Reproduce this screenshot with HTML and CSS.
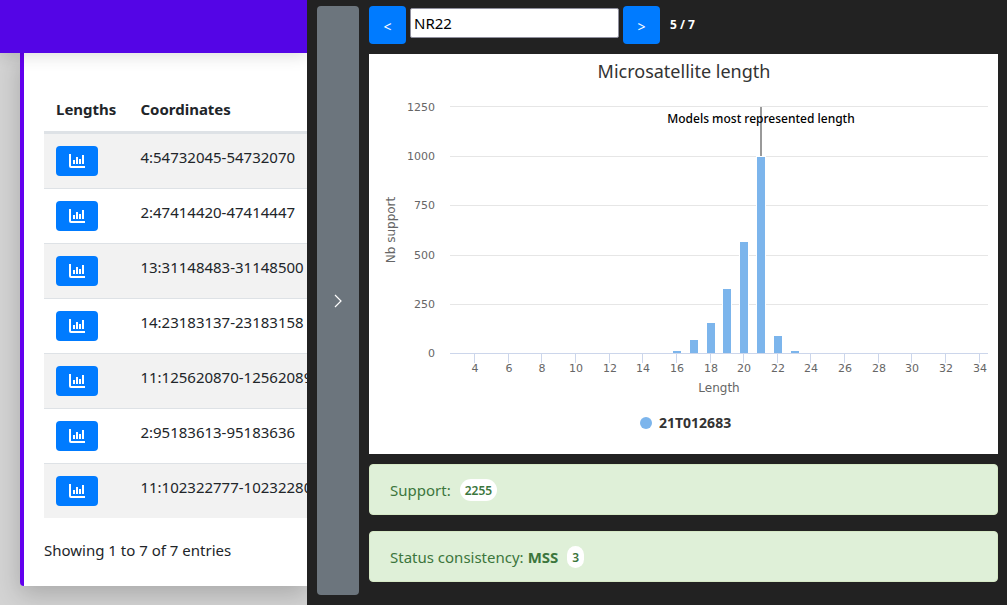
FILE: index.html
```html
<!DOCTYPE html>
<html lang="en">
<head>
<meta charset="utf-8">
<meta name="viewport" content="width=device-width, initial-scale=1">
<title>Microsatellite length</title>
<link rel="stylesheet" href="styles.css">
</head>
<body>
<svg class="defs" aria-hidden="true">
  <symbol id="chart-icon" viewBox="0 0 16 14">
    <path d="M0 0h2v12h14v2H2Q0 14 0 12zM4 6h2v4H4zM7 3h2v7H7zM10 5h2v5h-2zM13 1h2v9h-2z" fill="currentColor"/>
  </symbol>
</svg>
<div class="page">
  <div class="main">
    <header class="topbar"></header>
    <main class="content">
      <section class="card">
        <table class="loci">
          <thead>
            <tr><th class="col-lengths" scope="col">Lengths</th><th scope="col">Coordinates</th></tr>
          </thead>
          <tbody>
            <tr><td><button class="btn btn-chart" type="button" aria-label="Show lengths"><svg><use href="#chart-icon"/></svg></button></td><td>4:54732045-54732070</td></tr>
            <tr><td><button class="btn btn-chart" type="button" aria-label="Show lengths"><svg><use href="#chart-icon"/></svg></button></td><td>2:47414420-47414447</td></tr>
            <tr><td><button class="btn btn-chart" type="button" aria-label="Show lengths"><svg><use href="#chart-icon"/></svg></button></td><td>13:31148483-31148500</td></tr>
            <tr><td><button class="btn btn-chart" type="button" aria-label="Show lengths"><svg><use href="#chart-icon"/></svg></button></td><td>14:23183137-23183158</td></tr>
            <tr><td><button class="btn btn-chart" type="button" aria-label="Show lengths"><svg><use href="#chart-icon"/></svg></button></td><td>11:125620870-125620895</td></tr>
            <tr><td><button class="btn btn-chart" type="button" aria-label="Show lengths"><svg><use href="#chart-icon"/></svg></button></td><td>2:95183613-95183636</td></tr>
            <tr><td><button class="btn btn-chart" type="button" aria-label="Show lengths"><svg><use href="#chart-icon"/></svg></button></td><td>11:102322777-102322803</td></tr>
          </tbody>
        </table>
        <p class="info">Showing 1 to 7 of 7 entries</p>
      </section>
    </main>
  </div>
  <aside class="drawer">
    <button class="handle" type="button" aria-label="Close panel">
      <svg width="8" height="14" viewBox="0 0 8 14"><path d="M1 1l6 6-6 6" fill="none" stroke="#fff" stroke-width="1.2"/></svg>
    </button>
    <div class="details">
      <form class="nav">
        <button class="btn btn-nav" type="button" aria-label="Previous locus">&lt;</button>
        <input class="locus" type="text" value="NR22" aria-label="Locus">
        <button class="btn btn-nav" type="button" aria-label="Next locus">&gt;</button>
        <span class="count">5 / 7</span>
      </form>
      <svg class="chart" viewBox="0 0 629 400" role="img" aria-label="Microsatellite length">
        <rect width="629" height="400" fill="#fff"/>
        <text class="chart-title" x="315" y="24">Microsatellite length</text>
        <path class="grid" d="M81 52.5H619M81 102.5H619M81 151.5H619M81 201.5H619M81 250.5H619"/>
        <path class="plot-line" d="M392 53V103"/>
        <g class="bars">
          <rect x="303.5" y="296.5" width="9" height="3"/>
          <rect x="320.5" y="285.5" width="9" height="14"/>
          <rect x="337.5" y="268.5" width="9" height="31"/>
          <rect x="353.5" y="234.5" width="9" height="65"/>
          <rect x="370.5" y="187.5" width="9" height="112"/>
          <rect x="387.5" y="102.5" width="9" height="197"/>
          <rect x="404.5" y="281.5" width="9" height="18"/>
          <rect x="421.5" y="296.5" width="9" height="3"/>
        </g>
        <path class="axis" d="M81 299.5H619M105.5 300v9M139.5 300v9M172.5 300v9M206.5 300v9M240.5 300v9M273.5 300v9M307.5 300v9M341.5 300v9M374.5 300v9M408.5 300v9M441.5 300v9M475.5 300v9M509.5 300v9M542.5 300v9M576.5 300v9M610.5 300v9"/>
        <g class="labels-y">
          <text x="66" y="57">1250</text><text x="66" y="106">1000</text><text x="66" y="155">750</text>
          <text x="66" y="205">500</text><text x="66" y="254">250</text><text x="66" y="303">0</text>
        </g>
        <g class="labels-x">
          <text x="106" y="318">4</text><text x="140" y="318">6</text><text x="173" y="318">8</text><text x="207" y="318">10</text>
          <text x="241" y="318">12</text><text x="274" y="318">14</text><text x="308" y="318">16</text><text x="342" y="318">18</text>
          <text x="375" y="318">20</text><text x="409" y="318">22</text><text x="442" y="318">24</text><text x="476" y="318">26</text>
          <text x="510" y="318">28</text><text x="543" y="318">30</text><text x="577" y="318">32</text><text x="611" y="318">34</text>
        </g>
        <text class="axis-title" x="350" y="338">Length</text>
        <text class="axis-title" transform="translate(26 176) rotate(-90)">Nb support</text>
        <text class="plot-label" x="392" y="69">Models most represented length</text>
        <circle cx="277" cy="369" r="6" fill="#7cb5ec"/>
        <text class="legend" x="290" y="374">21T012683</text>
      </svg>
      <div class="alert">Support: <span class="badge">2255</span></div>
      <div class="alert">Status consistency: <strong>MSS</strong> <span class="badge">3</span></div>
    </div>
  </aside>
</div>
</body>
</html>
```
FILE: styles.css
```css
*, *::before, *::after { box-sizing: border-box; }

body {
  margin: 0;
  font: 15px/24px "Noto Sans", "Open Sans", sans-serif;
  color: #212529;
  background: #d3d3d3;
}

.defs { display: none; }

.page {
  display: grid;
  grid-template-columns: 307px minmax(0, 1fr);
  min-height: 100vh;
}

.main {
  display: flex;
  flex-direction: column;
  overflow: hidden;
}

.topbar {
  position: relative;
  height: 53px;
  background: #5405e6;
  box-shadow: 0 2px 16px rgba(0, 0, 0, 0.15);
}

.content { padding-left: 20px; }

.card {
  padding: 30px 0 24px 20px;
  border-left: 4px solid #6200ee;
  border-radius: 0 0 0 4px;
  background: #fff;
  box-shadow: 0 8px 24px rgba(0, 0, 0, 0.2);
}

.loci {
  width: 100%;
  border-collapse: separate;
  border-spacing: 0;
  white-space: nowrap;
}

.loci th, .loci td {
  padding: 12px;
  text-align: left;
  vertical-align: top;
}

.loci th {
  padding: 14px 12px 10px;
  border-bottom: 2px solid #dee2e6;
}

.loci td {
  border-top: 1px solid #dee2e6;
  line-height: 22px;
}

.loci tbody tr:nth-child(odd) { background: #f2f2f2; }
.loci .col-lengths { width: 83px; }

.info { margin: 20px 0 0; }

.btn {
  border: 0;
  border-radius: 4px;
  background: #007bff;
  color: #fff;
  font: inherit;
}

.btn-chart {
  display: flex;
  align-items: center;
  justify-content: center;
  width: 42px;
  height: 30px;
  padding: 0;
}

.btn-chart svg { width: 16px; height: 14px; }

.drawer {
  display: flex;
  gap: 10px;
  padding: 6px 9px 10px 10px;
  background: #222;
}

.handle {
  display: flex;
  flex: none;
  align-items: center;
  justify-content: center;
  width: 42px;
  padding: 0;
  border: 0;
  border-radius: 4px;
  background: #6c757d;
}

.details { flex: 1; min-width: 0; }

.nav {
  display: flex;
  gap: 4px;
  margin-bottom: 10px;
}

.btn-nav {
  width: 37px;
  height: 38px;
  padding: 4px 0 0;
  font-size: 14px;
}

.locus {
  width: 209px;
  height: 30px;
  margin-top: 2px;
  padding: 0 3px;
  border: 1px solid #8f8f9d;
  border-radius: 2px;
  background: #fff;
  color: #000;
  font: inherit;
}

.count {
  margin-left: 6px;
  color: #fff;
  font-size: 12px;
  font-weight: 700;
  line-height: 37px;
}

.chart {
  display: block;
  width: 100%;
  height: auto;
  margin-bottom: 10px;
  font-family: "DejaVu Sans", sans-serif;
  font-size: 11px;
  fill: #666;
}

.chart-title {
  font-family: "Noto Sans", sans-serif;
  font-size: 18px;
  fill: #333;
  text-anchor: middle;
}

.grid { stroke: #e6e6e6; }
.axis { stroke: #ccd6eb; }
.plot-line { stroke: #999; stroke-width: 2; }
.bars { fill: #7cb5ec; stroke: #fff; }
.labels-y { text-anchor: end; }
.labels-x, .axis-title, .plot-label { text-anchor: middle; }
.axis-title { font-size: 12px; }

.plot-label {
  font-family: "Noto Sans", sans-serif;
  font-size: 12px;
  font-weight: 500;
  fill: #000;
}

.legend {
  font-family: "Noto Sans", sans-serif;
  font-size: 14px;
  font-weight: 700;
  fill: #333;
}

.alert {
  display: flex;
  align-items: center;
  gap: 4px;
  padding: 13px 20px 12px;
  border: 1px solid #d6e9c6;
  border-radius: 4px;
  background: #dff0d8;
  color: #3c763d;
}

.alert + .alert { margin-top: 16px; }

.badge {
  margin-left: 5px;
  padding: 1px 5px 0;
  border-radius: 11px;
  background: #fff;
  font-size: 12px;
  font-weight: 600;
  line-height: 21px;
}
```
